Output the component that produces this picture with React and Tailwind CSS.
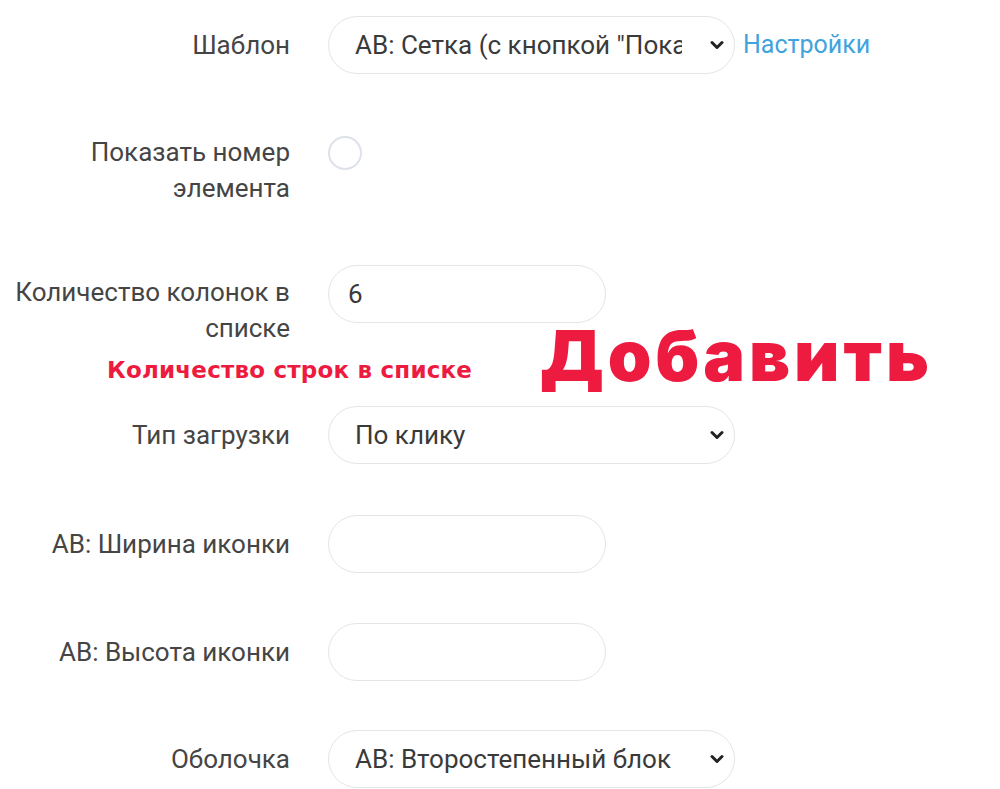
import { useState } from 'react';

const Chevron = () => (
  <svg
    viewBox="0 0 14 9"
    className="pointer-events-none absolute right-[11px] top-1/2 h-[9px] w-[14px] -translate-y-1/2"
    fill="none"
    stroke="#222"
    strokeWidth="3"
    strokeLinecap="round"
    strokeLinejoin="round"
  >
    <path d="M2 2l5 5 5-5" />
  </svg>
);

const SelectBox = ({ value, options }) => (
  <div className="relative h-[58px] w-[407px]">
    <select
      defaultValue={value}
      className="h-full w-full appearance-none rounded-[29px] border border-[#e3e5e8] bg-white pl-[26px] pr-[52px] text-[26px] text-[#3a3a3a] outline-none"
    >
      {options.map((opt) => (
        <option key={opt} value={opt}>
          {opt}
        </option>
      ))}
    </select>
    <Chevron />
  </div>
);

const TextBox = ({ value }) => (
  <input
    defaultValue={value}
    className="h-[58px] w-[278px] rounded-[29px] border border-[#e3e5e8] bg-white px-[19px] text-[26px] text-[#3a3a3a] outline-none"
  />
);

const Row = ({ label, children, className = '', labelPad = 'pt-[11px]' }) => (
  <div className={`flex items-start gap-[38px] ${className}`}>
    <div className={`w-[290px] text-right text-[26px] leading-[36px] text-[#454545] ${labelPad}`}>{label}</div>
    <div className="flex items-center gap-[8px]">{children}</div>
  </div>
);

export default function App() {
  const [showNumber, setShowNumber] = useState(false);

  return (
    <div
      className="relative min-h-[789px] w-[1000px] overflow-hidden bg-white pt-[16px]"
      style={{ fontFamily: 'Roboto, "Noto Sans", sans-serif' }}
    >
      <Row label="Шаблон">
        <SelectBox
          value='АВ: Сетка (с кнопкой "Показать ещё")'
          options={['АВ: Сетка (с кнопкой "Показать ещё")', 'АВ: Список']}
        />
        <a href="#" className="text-[25px] text-[#3fa4dd]">
          Настройки
        </a>
      </Row>

      <Row label={<>Показать номер<br />элемента</>} className="mt-[49px]">
        <button
          type="button"
          onClick={() => setShowNumber(!showNumber)}
          className="mt-[13px] h-[34px] w-[34px] rounded-full border-2 border-[#dde2ea] bg-white"
        >
          {showNumber && <span className="m-auto block h-[16px] w-[16px] rounded-full bg-[#3fa4dd]" />}
        </button>
      </Row>

      <Row label={<>Количество колонок в<br />списке</>} className="mt-[59px]" labelPad="pt-[9px]">
        <TextBox value="6" />
      </Row>

      <div
        className="mt-[10px] pl-[107px] text-[23px] font-bold leading-[28px] tracking-[0.2px] text-[#ee1b40]"
        style={{ fontFamily: '"DejaVu Sans", sans-serif' }}
      >
        Количество строк в списке
      </div>

      <Row label="Тип загрузки" className="mt-[22px]">
        <SelectBox value="По клику" options={['По клику', 'При прокрутке']} />
      </Row>

      <Row label="АВ: Ширина иконки" className="mt-[51px]">
        <TextBox value="" />
      </Row>

      <Row label="АВ: Высота иконки" className="mt-[50px]">
        <TextBox value="" />
      </Row>

      <Row label="Оболочка" className="mt-[49px]">
        <SelectBox value="АВ: Второстепенный блок" options={['АВ: Второстепенный блок', 'АВ: Основной блок']} />
      </Row>

      <div
        className="absolute left-[540px] top-[321px] text-[70px] font-black leading-none tracking-[4px] text-[#ee1b40]"
        style={{ fontFamily: 'Inter, "Noto Sans", sans-serif' }}
      >
        Добавить
      </div>
    </div>
  );
}
